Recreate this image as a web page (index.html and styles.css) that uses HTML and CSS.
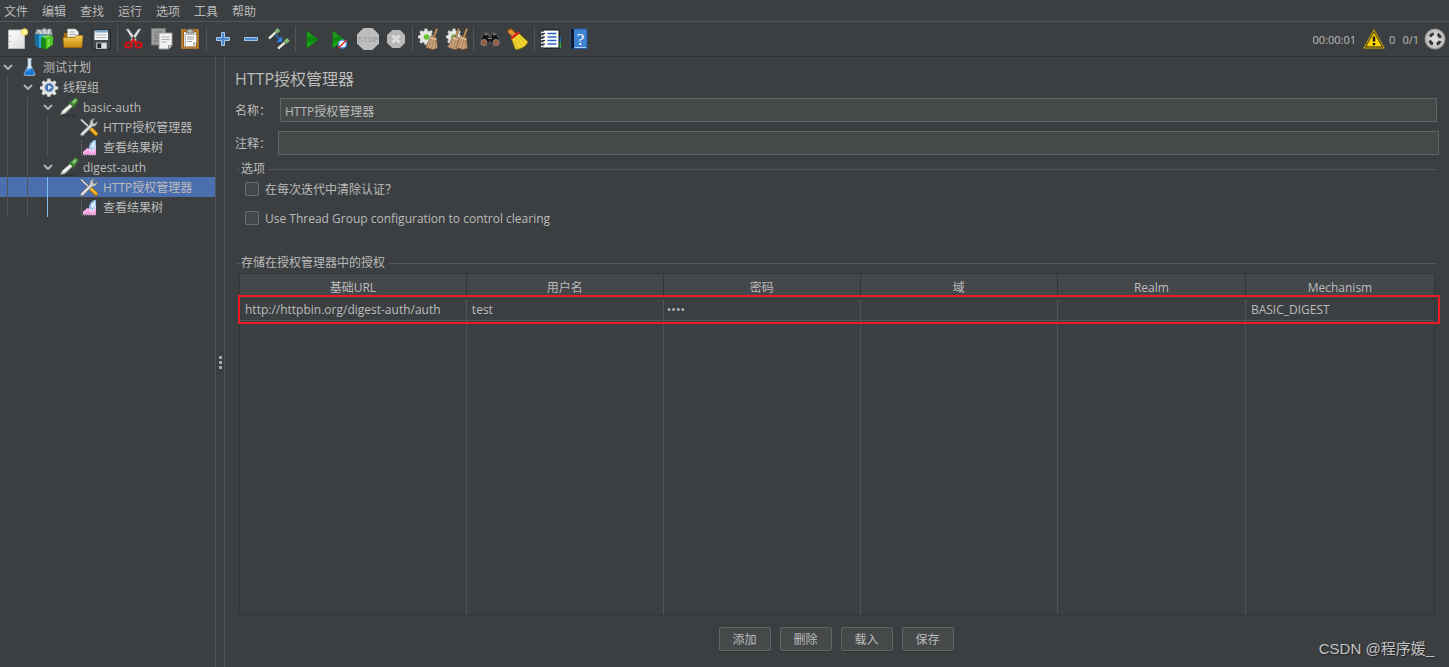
FILE: index.html
```html
<!DOCTYPE html>
<html lang="zh-CN">
<head>
<meta charset="utf-8">
<title>HTTP授权管理器</title>
<link rel="stylesheet" href="styles.css">
</head>
<body>
<svg class="defs" aria-hidden="true">
  <defs>
    <linearGradient id="gold" x1="0" y1="0" x2="0" y2="1"><stop offset="0" stop-color="#f3cf5a"/><stop offset="1" stop-color="#c98a0c"/></linearGradient>
    <linearGradient id="green" x1="0" y1="0" x2="0" y2="1"><stop offset="0" stop-color="#35b32f"/><stop offset=".5" stop-color="#078407"/><stop offset="1" stop-color="#1fd01c"/></linearGradient>
    <linearGradient id="paper" x1="0" y1="0" x2="1" y2="1"><stop offset="0" stop-color="#ffffff"/><stop offset="1" stop-color="#dcdcda"/></linearGradient>
    <linearGradient id="blue" x1="0" y1="0" x2="0" y2="1"><stop offset="0" stop-color="#9cc4ee"/><stop offset="1" stop-color="#4f8bd0"/></linearGradient>
    <radialGradient id="ball"><stop offset=".3" stop-color="#d8d8d8"/><stop offset=".8" stop-color="#c4c4c4"/><stop offset="1" stop-color="#858585"/></radialGradient>
    <symbol id="i-pipette" viewBox="0 0 20 20">
      <path d="M2 18.500h15" stroke="#303234" stroke-width="1.500"/>
      <path d="M1.500 17.800l1.500-4 8.500-7.300 2.500 2.500-8 7.500z" fill="#dfe3dc" stroke="#7d837c" stroke-width=".8"/>
      <path d="M4.500 14.500l7-6.200" stroke="#fff" stroke-width="1.300"/>
      <path d="M10.500 5l5 4.800" stroke="#2f7b2a" stroke-width="2.400"/>
      <path d="M12 5.500l3-3.500c2-2 5 .5 3.200 3L15 8.500z" fill="#59a548" stroke="#3d8137" stroke-width=".8"/>
      <path d="M14 5.500l2.500-2.500" stroke="#a4d893" stroke-width="1.300"/>
    </symbol>
    <symbol id="i-tools" viewBox="0 0 20 20">
      <path d="M2 2.500l9.500 9" stroke="#55595b" stroke-width="2.600"/>
      <path d="M2 2.500l9.500 9" stroke="#e2e4e4" stroke-width="1.500"/>
      <path d="M11.500 11.500l5.500 5.500" stroke="#936200" stroke-width="4.200" stroke-linecap="round"/>
      <path d="M11.700 11.500l5.300 5.300" stroke="#f4b62a" stroke-width="2.800" stroke-linecap="round"/>
      <path d="M2 18.500c-1-.7-.8-1.800 0-2.600L11 7.200c-.7-3 1.500-5.700 4.600-5.300L13.800 4l.4 2 2 .5L18.300 4.300c.6 3-2 5.700-4.900 5.100l-9 9c-.7.7-1.600.8-2.400.1z" fill="#c9cccc" stroke="#626668" stroke-width=".8"/>
      <path d="M3 17.200l9-8.700" stroke="#f8f8f8"/>
    </symbol>
    <symbol id="i-chart" viewBox="0 0 20 20">
      <path d="M2.500 3v15.500H17" fill="none" stroke="#777a7c" stroke-dasharray="1 1"/>
      <path d="M10 13c0-5 2.500-9.500 7-10v14.500h-7z" fill="#dceafb"/>
      <path d="M10 10.500c.5-4.500 3-7 7-7.500v5l-4 5z" fill="#8eb9ea"/>
      <path d="M12 9.500c.5-2.500 2-4 4-5v3.500l-3 3.500z" fill="#e8f2fe"/>
      <path d="M4 17.800v-3.300c2-.5 2.500-3 4.500-3.500 2 0 2.500 3 4.500 3l4-3.500v7.300z" fill="#f4a3e2"/>
      <path d="M4 16l4.500-3.500 4.500 3 4-3" stroke="#fbd8f4" fill="none"/>
    </symbol>
    <symbol id="i-cog" viewBox="0 0 22 22">
      <path d="M8.500 1h3.500l.5 2.600 2 .8L17 3l2 2.300-1.600 2.200.8 2 2.800.6v3l-2.800.5-.8 2L19 18l-2.300 2-2.300-1.500-2 .8-.5 2.500H8.600l-.5-2.500-2-.9L3.800 20l-2-2.200 1.400-2.200-.8-2L0 13v-3l2.500-.6.9-2L2 5.200 4.200 3l2 1.500 2-.8z" fill="#e6e7e5" stroke="#9fa19f" stroke-width=".5"/>
    </symbol>
    <symbol id="i-broom" viewBox="0 0 12 20">
      <path d="M8 8.500L11 .500" stroke="#875b30" stroke-width="2.200"/>
      <path d="M8 8.500L11 .500" stroke="#c99c67" stroke-width="1.200"/>
      <path d="M5.500 7l5 1.500 1 10-4.500 1.300-6.500-2.300C3 14 3.500 10.500 5.500 7z" fill="#c9a27a" stroke="#765035" stroke-width=".6"/>
      <path d="M6.500 9l-3.500 9M8.500 9L6 19M9.500 9.500v9" stroke="#a07a58" stroke-width=".7"/>
      <path d="M5 9l5.500 1.500" stroke="#ead1ac"/>
    </symbol>
  </defs>
</svg>

<nav class="menubar">
  <button>文件</button><button>编辑</button><button>查找</button><button>运行</button><button>选项</button><button>工具</button><button>帮助</button>
</nav>

<div class="toolbar">
  <button class="tool" aria-label="新建"><svg viewBox="0 0 22 22"><path d="M2.500 2h16v18.500h-16z" fill="url(#paper)" stroke="#b9bab8"/><path d="M4 7.500v1M4 13v1" stroke="#777"/><circle cx="18.500" cy="4" r="3.500" fill="#f4e26c"/><path d="M18.500 0v8M14.500 4h8" stroke="#e9cf45" stroke-width=".8"/><circle cx="18.500" cy="4" r="1.800" fill="#fffbd0"/></svg></button>
  <button class="tool" aria-label="模板"><svg viewBox="0 0 22 22"><path d="M1 6l2-5 4 1 3-2 3 1.500 4-1L18.500 7z" fill="#aeb6b7" stroke="#6c7577" stroke-width=".6"/><path d="M5 2l2 4M10 1l1 5M15 1l-1 5" stroke="#e9eeee"/><path d="M.500 6l5 1v13l-4-2z" fill="#1672a4"/><path d="M5 6.500h6V20H5z" fill="#35a2dc"/><path d="M7 9h12v8L12 21.500l-5-2z" fill="#177a13"/><path d="M11.500 10.500l7.500-2.500v8.500l-7.500 5z" fill="#4ac623"/><path d="M7 9l4.500 1.500v11L7 19.500z" fill="#168717"/><path d="M13.500 12l2.500-1v6.500L13.500 19z" fill="#75dc45"/><path d="M7 9l6.500-2L19 8l-7.500 2.500z" fill="#71d84a"/></svg></button>
  <button class="tool" aria-label="打开"><svg viewBox="0 0 22 22"><path d="M2 5h5l1 2h11v11H2z" fill="#a96d0c"/><path d="M5.500 10V1h8l3 3v7z" fill="#f1f1ef" stroke="#adadab" stroke-width=".6"/><path d="M7.500 4h5M7.500 6.500h6.500M7.500 9h6.500" stroke="#aaa"/><path d="M1 9.500h12l1.500-2H21l-1.200 12H2z" fill="url(#gold)" stroke="#a66e0d" stroke-width=".7"/></svg></button>
  <button class="tool" aria-label="保存"><svg viewBox="0 0 22 22"><path d="M2 2h18l.5 1v18H3.500L2 19.500z" fill="#45494c" stroke="#202225" stroke-width=".8"/><path d="M4.500 2.500h13.500v9.500H4.500z" fill="#f2f3f4"/><path d="M4.500 2.500h13.500v2H4.500z" fill="#75a8d3"/><path d="M6 7h10.500M6 9.500h10.500" stroke="#b8bbbd"/><path d="M6 14.500h11V21H6z" fill="#aeb2b3"/><path d="M7.500 15.500h3.500V20H7.500z" fill="#212325"/><path d="M12 15.500h4V20h-4z" fill="#dfe1e1"/></svg></button>
  <span class="sep"></span>
  <button class="tool" aria-label="剪切"><svg viewBox="0 0 22 22"><path d="M3 1l8.500 13.500L13.500 12 5.500 1zM18 1L9.500 14.500 7.500 12 15.500 1z" fill="#e5e7e7" stroke="#87898a" stroke-width=".6"/><path d="M8 15l2.500-3 2.500 3" stroke="#d91717" stroke-width="2.500" fill="none"/><ellipse cx="5.500" cy="17" rx="3" ry="2.500" fill="none" stroke="#d31313" stroke-width="2.200"/><ellipse cx="15.500" cy="17" rx="3" ry="2.500" fill="none" stroke="#d31313" stroke-width="2.200"/></svg></button>
  <button class="tool" aria-label="复制"><svg viewBox="0 0 22 22"><path d="M.5.500h14V17H.500z" fill="#9c9e9e" stroke="#777"/><path d="M3 4h8M3 7h6M3 10h5M3 13h5" stroke="#717474"/><path d="M8 5h13v12.500L17.500 21H8z" fill="#f1f1ef" stroke="#9b9b99"/><path d="M10.500 9h8M10.500 11.500h8M10.500 14h5" stroke="#b2b3b1"/><path d="M17.500 21v-3.500H21" fill="#d0d0ce" stroke="#929290"/></svg></button>
  <button class="tool" aria-label="粘贴"><svg viewBox="0 0 22 22"><path d="M3 2h16v18H3z" fill="#9a6114" stroke="#c8862b" stroke-width="1.500"/><path d="M5 4h12v14.500H5z" fill="#e4e4e1"/><path d="M7.500 5h7.500V2.500h-2L12.500 1h-3L9 2.500H7.500z" fill="#b8bbb9" stroke="#555" stroke-width=".7"/><path d="M6.500 6.500h11V15L14 18.500H6.500z" fill="#fafaf8" stroke="#929290" stroke-width=".6"/><path d="M8 9h7M8 11h7M8 13.500h5" stroke="#a2a3a1"/><path d="M14 18v-3.500h3.500z" fill="#b4b5b2"/></svg></button>
  <span class="sep"></span>
  <button class="tool" aria-label="展开"><svg viewBox="0 0 22 22"><path d="M9.500 4.500h3v5h5v3h-5v5h-3v-5h-5v-3h5z" fill="#4f86cc" stroke="#a3c9f2"/></svg></button>
  <button class="tool" aria-label="折叠"><svg viewBox="0 0 22 22"><path d="M4.500 9.500h13v3h-13z" fill="#4f86cc" stroke="#a0c6ed"/></svg></button>
  <button class="tool" aria-label="切换"><svg viewBox="0 0 22 22"><path d="M1 10.500l7-6.500M10 20.500l7-6" stroke="#2a2c2e" stroke-width="4"/><path d="M1 10.500l7-6.500M10 20.500l7-6" stroke="#e4e9e0" stroke-width="2.400"/><path d="M8 4l3-2.500M17 14.500l3.500-3" stroke="#7fb86f" stroke-width="3.800"/><path d="M7 4.500l2 2M16 13.500l2 2" stroke="#4c8243" stroke-width="1"/><path d="M8 7.500l4.500 4.500" stroke="#2778e3" stroke-width="2" stroke-dasharray="2 1"/><path d="M14 8.500v5.500H8.500z" fill="#2f86f5"/></svg></button>
  <span class="sep"></span>
  <button class="tool" aria-label="启动"><svg viewBox="0 0 22 22"><path d="M6 3l11 8.500L6 20z" fill="url(#green)" stroke="#147c15"/></svg></button>
  <button class="tool" aria-label="不停顿开始"><svg viewBox="0 0 22 22"><path d="M4 3l11 8.500L4 20z" fill="url(#green)" stroke="#147c15"/><circle cx="13.500" cy="16" r="4" fill="#f7fbff" stroke="#4a96df" stroke-width="1.500"/><path d="M9.500 20l8-8" stroke="#e42020" stroke-width="1.500"/></svg></button>
  <button class="tool" aria-label="停止"><svg viewBox="0 0 22 22"><path d="M6.500 0h9L22 6.500v9L15.500 22h-9L0 15.500v-9z" fill="#bdbdbd"/><text x="11" y="14" class="stop-text">STOP</text></svg></button>
  <button class="tool" aria-label="关闭"><svg viewBox="0 0 22 22"><path d="M7.500 2h7.500l5 5v8l-5 5H7.500l-5.500-5V7z" fill="#b8b8b8"/><path d="M7.500 7.500l7 7m0-7l-7 7" stroke="#dedede" stroke-width="3"/></svg></button>
  <span class="sep"></span>
  <button class="tool" aria-label="清除"><svg viewBox="0 0 22 22"><use href="#i-cog" x="0" y="0" width="17" height="17"/><circle cx="8.500" cy="9" r="2.800" fill="#67c234"/><use href="#i-broom" x="7" y="0" width="13" height="22"/></svg></button>
  <button class="tool" aria-label="清除全部"><svg viewBox="0 0 22 22"><use href="#i-cog" x="0" y="0" width="17" height="17"/><circle cx="8" cy="9" r="2.800" fill="#67c234"/><use href="#i-broom" x="1" y="0" width="13" height="22"/><use href="#i-broom" x="9" y="0" width="13" height="22"/></svg></button>
  <span class="sep"></span>
  <button class="tool" aria-label="查找"><svg viewBox="0 0 22 22"><path d="M5 5l4-1 1 5h2l1-5 4 1 4 8-1 4-6 1-3-5-3 5-6-1-1-4z" fill="#141516" stroke="#6e6e6e" stroke-width=".7"/><path d="M6 6.500l2.500-.5M14 6l2.500.5" stroke="#a9a9a9" stroke-width="1.500"/><circle cx="5" cy="14.500" r="3" fill="#9b5b32" stroke="#858585"/><circle cx="17" cy="14.500" r="3" fill="#9b5b32" stroke="#858585"/><path d="M9 10.500h4" stroke="#888"/></svg></button>
  <button class="tool" aria-label="重置查找"><svg viewBox="0 0 22 22"><path d="M3.500 3.500L7 7" stroke="#92500b" stroke-width="6" stroke-linecap="round"/><path d="M3.500 3.500L7 7" stroke="#dc9435" stroke-width="4" stroke-linecap="round"/><path d="M4 9.500l7-5 10 9.500C18.500 18.500 15 21 8.500 21.500z" fill="#f2d731" stroke="#8d7600" stroke-width=".7"/><path d="M7 12l4 8M9.500 10l5.500 9M11.500 8l7 8" stroke="#c9ad1a" stroke-width=".8"/><path d="M4 10.500l8-6" stroke="#d72222" stroke-width="2.500"/></svg></button>
  <span class="sep"></span>
  <button class="tool" aria-label="函数助手"><svg viewBox="0 0 22 22"><path d="M18 9h3v5h-3z" fill="#1d64c9"/><path d="M18 14h3v6h-3z" fill="#22a637"/><path d="M3 2h16v18H3z" fill="#fff" stroke="#111"/><path d="M7.500 5.500h9M7.500 9h9M7.500 12.500h9M7.500 16h9" stroke="#2a65bb" stroke-width="1.500"/><path d="M1 4.500h4M1 8h4M1 11.500h4M1 15h4M1 18.500h4" stroke="#eee" stroke-width="1.500"/><path d="M3 5.500h2M3 9h2M3 12.500h2M3 16h2" stroke="#222"/></svg></button>
  <button class="tool" aria-label="帮助"><svg viewBox="0 0 22 22"><path d="M3 1h16v19.500H3z" fill="#3c83d4" stroke="#235ba5"/><path d="M3 1h3v19.500H3z" fill="#101c30"/><path d="M6.500 19.500H18" stroke="#b3d0ee"/><text x="12.500" y="16.500" class="help-text">?</text></svg></button>
  <div class="status">
    <span class="timer">00:00:01</span>
    <svg class="warn" viewBox="0 0 22 22" aria-hidden="true"><path d="M11 2l10 18H1z" fill="#161302" stroke="#a98f17" stroke-width="1.500" stroke-linejoin="round"/><path d="M11 4.500L18.700 18.500H3.300z" fill="#f9d30b"/><path d="M11 8.500v5M11 15v2.200" stroke="#17140a" stroke-width="2.400"/></svg>
    <span class="errors">0</span><span class="threads">0/1</span>
    <svg class="led" viewBox="0 0 22 22" aria-hidden="true"><circle cx="11" cy="11" r="10.500" fill="url(#ball)"/><circle cx="11" cy="11" r="5.500" fill="none" stroke="#353535" stroke-width="3" stroke-dasharray="4.640 4" stroke-dashoffset="-2"/></svg>
  </div>
</div>

<div class="workspace">
  <aside class="side">
    <ul class="tree">
      <li class="row"><span class="twist"><svg viewBox="0 0 10 6"><path d="M1 1l4 4 4-4"/></svg></span><svg class="node" viewBox="0 0 20 20"><path d="M8.500 1.500h4l-.5 2v5l4 8.500q0 1.500-1.500 1.500H6.500Q5 18.500 5 17l4-8.500v-5z" fill="#d6e9f8" stroke="#9bb3c5" stroke-width=".7"/><path d="M8 11.500h5.500l2 5q0 1.500-1 1.500H6.500q-1 0-1-1.500z" fill="#1878d5"/><path d="M7.500 15l1.500-3h3z" fill="#6db5f2"/></svg><span class="text">测试计划</span></li>
      <li class="row"><i class="guide"></i><span class="twist"><svg viewBox="0 0 10 6"><path d="M1 1l4 4 4-4"/></svg></span><svg class="node" viewBox="0 0 20 20"><use href="#i-cog" x="1" y="1" width="19" height="19"/><circle cx="10.200" cy="10.500" r="4.300" fill="#4270ac" stroke="#8ba6cb"/><path d="M9 8l4 2.500-4 2.500z" fill="#d6e7fc"/></svg><span class="text">线程组</span></li>
      <li class="row"><i class="guide"></i><i class="guide"></i><span class="twist"><svg viewBox="0 0 10 6"><path d="M1 1l4 4 4-4"/></svg></span><svg class="node"><use href="#i-pipette"/></svg><span class="text">basic-auth</span></li>
      <li class="row"><i class="guide"></i><i class="guide"></i><i class="guide"></i><span class="twist"></span><svg class="node"><use href="#i-tools"/></svg><span class="text">HTTP授权管理器</span></li>
      <li class="row"><i class="guide"></i><i class="guide"></i><i class="guide"></i><span class="twist"></span><svg class="node"><use href="#i-chart"/></svg><span class="text">查看结果树</span></li>
      <li class="row"><i class="guide"></i><i class="guide"></i><span class="twist"><svg viewBox="0 0 10 6"><path d="M1 1l4 4 4-4"/></svg></span><svg class="node"><use href="#i-pipette"/></svg><span class="text">digest-auth</span></li>
      <li class="row selected"><i class="guide"></i><i class="guide"></i><i class="guide active"></i><span class="twist"></span><svg class="node"><use href="#i-tools"/></svg><span class="text">HTTP授权管理器</span></li>
      <li class="row"><i class="guide"></i><i class="guide"></i><i class="guide active"></i><span class="twist"></span><svg class="node"><use href="#i-chart"/></svg><span class="text">查看结果树</span></li>
    </ul>
  </aside>
  <div class="splitter"><i></i><i></i><i></i></div>
  <main class="panel">
    <h1>HTTP授权管理器</h1>
    <div class="field name"><label for="name">名称：</label><input id="name" type="text" value="HTTP授权管理器"></div>
    <div class="field comment"><label for="comment">注释：</label><input id="comment" type="text"></div>
    <fieldset class="options">
      <legend>选项</legend>
      <label class="check"><input type="checkbox"><span class="text">在每次迭代中清除认证？</span></label>
      <label class="check"><input type="checkbox"><span class="text">Use Thread Group configuration to control clearing</span></label>
    </fieldset>
    <fieldset class="store">
      <legend>存储在授权管理器中的授权</legend>
      <div class="grid-wrap">
        <table>
          <colgroup><col class="c-url"><col class="c-text"><col class="c-text"><col class="c-text"><col class="c-end"><col class="c-end"></colgroup>
          <thead><tr><th>基础URL</th><th>用户名</th><th>密码</th><th>域</th><th>Realm</th><th>Mechanism</th></tr></thead>
          <tbody>
            <tr class="record"><td>http://httpbin.org/digest-auth/auth</td><td>test</td><td class="secret">••••</td><td></td><td></td><td>BASIC_DIGEST</td></tr>
            <tr><td></td><td></td><td></td><td></td><td></td><td></td></tr>
          </tbody>
        </table>
        <div class="highlight"></div>
      </div>
    </fieldset>
    <div class="actions"><button>添加</button><button>删除</button><button>载入</button><button>保存</button></div>
    <div class="watermark">CSDN @程序媛_</div>
  </main>
</div>
</body>
</html>
```

FILE: styles.css
```css
* { box-sizing: border-box; }
body {
  margin: 0;
  min-height: 100vh;
  display: flex;
  flex-direction: column;
  background: #3c3f41;
  color: #bbbbbb;
  font: 12px/20px "Open Sans", "Noto Sans CJK SC", sans-serif;
}
button, input { font: inherit; color: inherit; }
.defs { position: absolute; width: 0; height: 0; }
.text { padding-top: 2px; }

.menubar {
  display: flex;
  gap: 14px;
  height: 22px;
  padding: 2px 0 0 4px;
  border-bottom: 1px solid #555555;
}
.menubar button { border: 0; padding: 0; background: none; }

.toolbar {
  display: flex;
  align-items: center;
  height: 35px;
  padding: 0 3px;
  border-bottom: 1px solid #323232;
}
.tool {
  width: 28px;
  height: 28px;
  padding: 3px;
  border: 0;
  background: none;
}
.tool svg { display: block; width: 22px; height: 22px; }
.stop-text { font: 700 8px "Liberation Sans", sans-serif; fill: #a4a4a4; text-anchor: middle; }
.help-text { font: 17px "Liberation Serif", serif; fill: #ffffff; text-anchor: middle; }
.sep { width: 5px; height: 26px; border-left: 2px solid transparent; background: linear-gradient(#555555, #555555) 0 0 / 1px 100% no-repeat; }
.status { display: flex; align-items: center; margin-left: auto; font-size: 11px; }
.status span { padding-top: 2px; }
.warn { width: 22px; height: 22px; margin: 0 4px 0 7px; }
.led { width: 22px; height: 22px; margin-left: 5px; }
.threads { margin-left: 7px; }

.workspace { flex: 1; display: flex; }
.side { width: 216px; flex: none; border-right: 1px solid #555555; }
.tree { margin: 0; padding: 0; list-style: none; }
.row { display: flex; align-items: center; height: 20px; white-space: nowrap; }
.guide { width: 13px; height: 20px; margin-left: 7px; border-left: 1px solid #555555; }
.guide.active { border-color: #7fbff0; }
.twist { width: 15px; margin-right: 4px; display: flex; justify-content: center; }
.twist svg { width: 10px; height: 6px; fill: none; stroke: #b0b2b3; stroke-width: 2; }
.node { width: 20px; height: 20px; margin-right: 4px; }
.selected { background: #4b6eaf; }

.splitter {
  width: 9px;
  flex: none;
  display: flex;
  flex-direction: column;
  align-items: center;
  justify-content: center;
  gap: 2px;
  border-right: 1px solid #555555;
}
.splitter i { width: 3px; height: 3px; border-radius: 1px; background: #afb1b3; }

.panel {
  position: relative;
  flex: 1;
  min-width: 0;
  display: flex;
  flex-direction: column;
  padding: 10px 10px 16px;
}
h1 { margin: 0 0 7px; font-size: 16px; line-height: 24px; font-weight: 400; }
.field { display: flex; align-items: center; margin-bottom: 9px; }
.field label { flex: none; width: 45px; padding-top: 2px; }
.comment label { width: 43px; }
.name { margin-right: 2px; }
.comment { margin-bottom: 4px; }
.field input {
  flex: 1;
  min-width: 0;
  height: 24px;
  padding: 1px 4px 0;
  border: 1px solid #646464;
  background: #45494a;
}
fieldset {
  min-width: 0;
  margin: 0 2px;
  padding: 0;
  border: 0;
  border-top: 1px solid #555555;
}
legend { margin-left: 3px; padding: 0 4px 0 1px; line-height: 20px; }
.options { height: 94px; }
.check { display: flex; align-items: center; height: 20px; margin: 0 0 9px 8px; }
.check input {
  appearance: none;
  width: 14px;
  height: 14px;
  margin: 0 6px 0 0;
  border: 1px solid #6b6b6b;
  border-radius: 1px;
  background: #43494a;
}
.store { flex: 1; display: flex; flex-direction: column; }
.grid-wrap { position: relative; flex: 1; display: flex; margin: 0 2px; }
table {
  width: 100%;
  table-layout: fixed;
  border-collapse: separate;
  border-spacing: 0;
  border: 1px solid #333537;
}
.c-url { width: 19%; }
.c-text { width: 16.500%; }
th {
  height: 25px;
  padding: 3px 0 0;
  font-weight: 400;
  background: #45484a;
  border-right: 1px solid #333537;
  border-bottom: 1px solid #333537;
}
td { padding: 0 5px; border-right: 1px solid #515355; }
th:last-child, td:last-child { border-right: 0; }
.record td { height: 21px; padding-top: 1px; border-bottom: 1px solid #515355; }
.record .secret { padding-left: 3px; }
.highlight {
  position: absolute;
  top: 22px;
  left: -1px;
  right: -5px;
  height: 29px;
  border: 2px solid #ed1c24;
}
.actions { display: flex; justify-content: center; gap: 9px; margin: 12px 2px 0 0; }
.actions button {
  width: 52px;
  height: 24px;
  padding: 2px 0 0;
  border: 1px solid #646464;
  border-radius: 2px;
  background: #45494a;
  box-shadow: 0 1px 1px #323435;
}
.watermark {
  position: absolute;
  right: 15px;
  bottom: 6px;
  font: 15px/24px "Liberation Sans", "Noto Sans CJK SC", sans-serif;
  color: #c3c4c5;
  text-shadow: 1px 1px 1px #222426;
}
```
